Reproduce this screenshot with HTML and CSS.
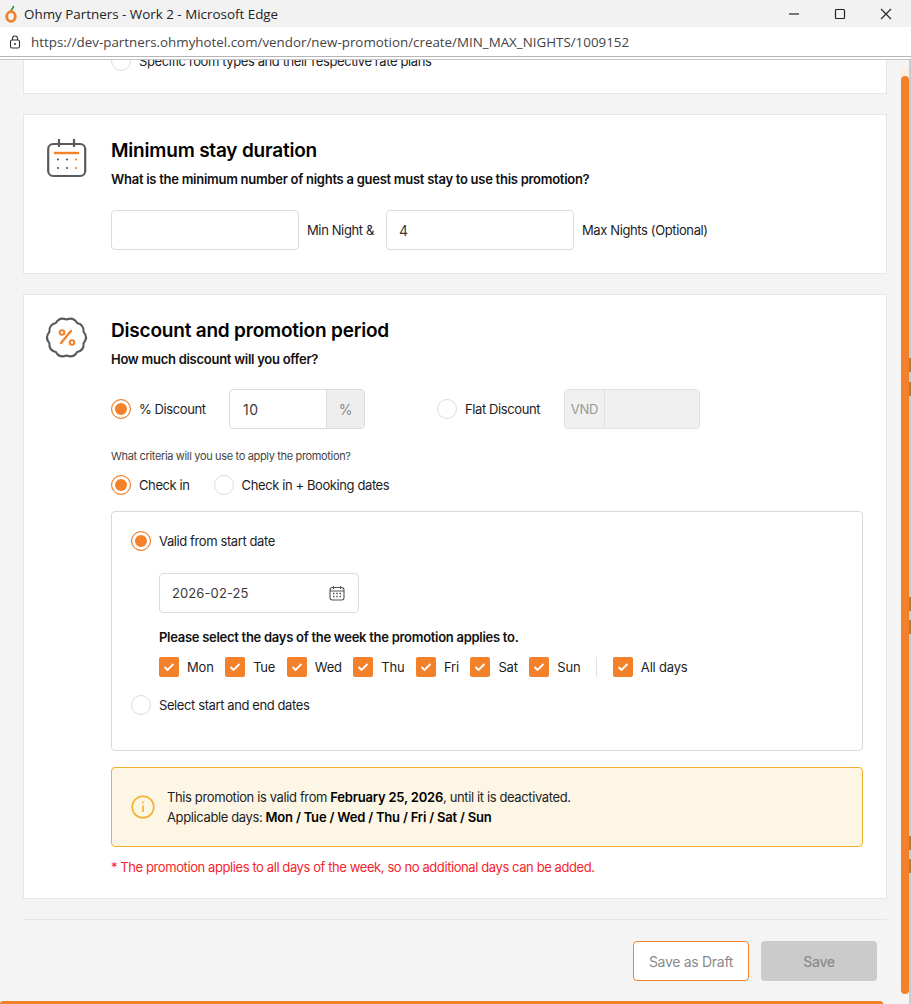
FILE: index.html
```html
<!DOCTYPE html>
<html lang="en">
<head>
<meta charset="utf-8">
<title>Ohmy Partners - Work 2 - Microsoft Edge</title>
<link rel="stylesheet" href="styles.css">
</head>
<body>
<div class="window">
  <header class="titlebar">
    <svg class="logo" width="14" height="18" viewBox="0 0 14 18"><path d="M7 6 9.800 1" stroke="#3f8f3a" stroke-width="1.600" fill="none"/><ellipse cx="7" cy="11.500" rx="4.300" ry="4.800" fill="none" stroke="#f28129" stroke-width="2.800"/></svg>
    <span class="title">Ohmy Partners - Work 2 - Microsoft Edge</span>
    <div class="winctl">
      <svg width="12" height="12" viewBox="0 0 12 12"><path d="M1 6h10" stroke="#222" stroke-width="1.200"/></svg>
      <svg width="12" height="12" viewBox="0 0 12 12"><rect x="1.500" y="1.500" width="9" height="9" rx="1" fill="none" stroke="#222" stroke-width="1.200"/></svg>
      <svg width="12" height="12" viewBox="0 0 12 12"><path d="M1 1l10 10M11 1 1 11" stroke="#222" stroke-width="1.100"/></svg>
    </div>
  </header>
  <div class="addressbar">
    <svg width="12" height="14" viewBox="0 0 12 14"><path d="M3.500 5V3.500a2.500 2.500 0 0 1 5 0V5" fill="none" stroke="#333" stroke-width="1.100"/><rect x="1.500" y="5" width="9" height="8" rx="1.500" fill="none" stroke="#333" stroke-width="1.100"/><circle cx="6" cy="9" r="1" fill="#333"/></svg>
    <span class="url">https://dev-partners.ohmyhotel.com/vendor/new-promotion/create/MIN_MAX_NIGHTS/1009152</span>
  </div>
  <main class="content">
    <section class="card card-clipped">
      <label class="radio-row"><span class="radio"></span><span>Specific room types and their respective rate plans</span></label>
    </section>

    <section class="card card-stay">
      <svg class="section-icon" width="42" height="42" viewBox="0 0 42 42" fill="none">
        <rect x="2.200" y="5" width="37" height="32" rx="5" stroke="#5a5a5a" stroke-width="2.200"/>
        <path d="M13 0v8M28 0v8" stroke="#5a5a5a" stroke-width="2.200"/>
        <path d="M8 14h25" stroke="#f28129" stroke-width="2.400"/>
        <g fill="#5a5a5a"><circle cx="12" cy="20.500" r="1.100"/><circle cx="21" cy="20.500" r="1.100"/><circle cx="12" cy="29" r="1.100"/><circle cx="21" cy="29" r="1.100"/></g>
        <g fill="#f28129"><circle cx="30" cy="20.500" r="1.100"/><circle cx="30" cy="29" r="1.100"/></g>
      </svg>
      <div class="section-body">
        <h2>Minimum stay duration</h2>
        <p class="question">What is the minimum number of nights a guest must stay to use this promotion?</p>
        <div class="nights-row">
          <div class="field field-nights"></div>
          <span>Min Night &amp;</span>
          <div class="field field-nights max"><span class="value">4</span></div>
          <span>Max Nights (Optional)</span>
        </div>
      </div>
    </section>

    <section class="card card-discount">
      <svg class="section-icon" width="42" height="42" viewBox="0 0 42 42" fill="none">
        <path d="M20.500 1.500Q27.300 -1.400 31.100 4.900 38.300 6.600 37.600 13.900 42.500 19.500 37.600 25.100 38.300 32.400 31.100 34.100 27.300 40.400 20.500 37.500 13.700 40.400 9.900 34.100 2.700 32.400 3.400 25.100 -1.500 19.500 3.400 13.900 2.700 6.600 9.900 4.900 13.700 -1.400 20.500 1.500Z" stroke="#5a5a5a" stroke-width="2.100" stroke-linejoin="round"/>
        <path d="M25 13 15 25" stroke="#f28129" stroke-width="2.300" stroke-linecap="round"/>
        <circle cx="16" cy="14.500" r="2.300" stroke="#f28129" stroke-width="2"/>
        <circle cx="26" cy="24.500" r="2.300" stroke="#f28129" stroke-width="2"/>
      </svg>
      <div class="section-body">
        <h2>Discount and promotion period</h2>
        <p class="question">How much discount will you offer?</p>
        <div class="discount-row">
          <label class="radio-row percent-option"><span class="radio on"></span><span>% Discount</span></label>
          <div class="field field-addon percent">
            <span class="value">10</span><span class="addon">%</span>
          </div>
          <label class="radio-row flat-option"><span class="radio"></span><span>Flat Discount</span></label>
          <div class="field-disabled"><span class="vnd">VND</span></div>
        </div>
        <p class="criteria">What criteria will you use to apply the promotion?</p>
        <div class="criteria-row">
          <label class="radio-row"><span class="radio on"></span><span>Check in</span></label>
          <label class="radio-row"><span class="radio"></span><span>Check in + Booking dates</span></label>
        </div>
        <div class="period-box">
          <label class="radio-row"><span class="radio on"></span><span>Valid from start date</span></label>
          <div class="period-inner">
            <div class="field field-date">
              <span class="value">2026-02-25</span>
              <svg width="16" height="16" viewBox="0 0 16 16" fill="none"><rect x="1" y="2.500" width="14" height="12.500" rx="2.500" stroke="#555" stroke-width="1.100"/><path d="M1 6h14M4.500 1v3M11.500 1v3" stroke="#555" stroke-width="1.100"/><path d="M4 8.500h1.500M7.300 8.500h1.500M10.500 8.500H12M4 11.500h1.500M7.300 11.500h1.500M10.500 11.500H12" stroke="#555" stroke-width="1.300"/></svg>
            </div>
            <p class="days-title">Please select the days of the week the promotion applies to.</p>
            <div class="days-row">
              <label class="day"><span class="check"><svg width="12" height="10" viewBox="0 0 12 10"><path d="M1.500 5l3 3 6-6" fill="none" stroke="#fff" stroke-width="1.800"/></svg></span>Mon</label>
              <label class="day"><span class="check"><svg width="12" height="10" viewBox="0 0 12 10"><path d="M1.500 5l3 3 6-6" fill="none" stroke="#fff" stroke-width="1.800"/></svg></span>Tue</label>
              <label class="day"><span class="check"><svg width="12" height="10" viewBox="0 0 12 10"><path d="M1.500 5l3 3 6-6" fill="none" stroke="#fff" stroke-width="1.800"/></svg></span>Wed</label>
              <label class="day"><span class="check"><svg width="12" height="10" viewBox="0 0 12 10"><path d="M1.500 5l3 3 6-6" fill="none" stroke="#fff" stroke-width="1.800"/></svg></span>Thu</label>
              <label class="day"><span class="check"><svg width="12" height="10" viewBox="0 0 12 10"><path d="M1.500 5l3 3 6-6" fill="none" stroke="#fff" stroke-width="1.800"/></svg></span>Fri</label>
              <label class="day"><span class="check"><svg width="12" height="10" viewBox="0 0 12 10"><path d="M1.500 5l3 3 6-6" fill="none" stroke="#fff" stroke-width="1.800"/></svg></span>Sat</label>
              <label class="day"><span class="check"><svg width="12" height="10" viewBox="0 0 12 10"><path d="M1.500 5l3 3 6-6" fill="none" stroke="#fff" stroke-width="1.800"/></svg></span>Sun</label>
              <span class="days-sep"></span>
              <label class="day"><span class="check"><svg width="12" height="10" viewBox="0 0 12 10"><path d="M1.500 5l3 3 6-6" fill="none" stroke="#fff" stroke-width="1.800"/></svg></span>All days</label>
            </div>
          </div>
          <label class="radio-row"><span class="radio"></span><span>Select start and end dates</span></label>
        </div>
        <div class="notice">
          <svg width="24" height="24" viewBox="0 0 24 24" fill="none"><circle cx="12" cy="12" r="10.800" stroke="#f2b02e" stroke-width="1.600"/><path d="M12 10.500v6.500" stroke="#f2b02e" stroke-width="1.600"/><circle cx="12" cy="7.500" r="1" fill="#f2b02e"/></svg>
          <div>
            <p>This promotion is valid from <b>February 25, 2026</b>, until it is deactivated.</p>
            <p>Applicable days: <b>Mon / Tue / Wed / Thu / Fri / Sat / Sun</b></p>
          </div>
        </div>
        <p class="warning">* The promotion applies to all days of the week, so no additional days can be added.</p>
      </div>
    </section>

    <footer class="actions">
      <button class="btn btn-draft" type="button">Save as Draft</button>
      <button class="btn btn-save" type="button">Save</button>
    </footer>
  </main>
  <div class="scroll-track"></div>
  <div class="scroll-thumb"></div>
  <div class="scroll-bottom"></div>
  <div class="edge-strip">
    <span class="edge-mark m1"></span><span class="edge-mark m2"></span>
    <span class="edge-mark m3"></span><span class="edge-mark m4"></span>
    <span class="edge-mark m5"></span><span class="edge-mark m6"></span>
  </div>
</div>
</body>
</html>
```

FILE: styles.css
```css
* { box-sizing: border-box; }
html, body { margin: 0; padding: 0; }
body {
  width: 911px;
  height: 1004px;
  overflow: hidden;
  font-family: Inter, "Liberation Sans", sans-serif;
  font-size: 14px;
  color: #1d1d1f;
  background: #f4f4f4;
}
p, h2 { margin: 0; }
.window { position: relative; width: 911px; height: 1004px; overflow: hidden; display: flex; flex-direction: column; }

.titlebar {
  height: 27px;
  flex: none;
  display: flex;
  align-items: center;
  background: #f2f2f2;
  padding-left: 4px;
}
.logo { flex: none; }
.title {
  margin-left: 6px;
  font-family: "Open Sans", "Noto Sans", sans-serif;
  font-size: 13.4px;
  color: #222;
}
.winctl { margin-left: auto; display: flex; gap: 34px; padding-right: 19px; }

.addressbar {
  height: 30px;
  flex: none;
  display: flex;
  align-items: center;
  gap: 10px;
  padding-left: 9px;
  background: #fff;
  border-bottom: 1px solid #b5b5b5;
  position: relative;
  z-index: 2;
  box-shadow: 0 2px 0 #fff, 0 3px 0 #c4c4c4;
}
.url {
  font-family: "Open Sans", "Noto Sans", sans-serif;
  font-size: 13.36px;
  color: #444;
}

.content { flex: 1; padding: 0 24px 0 23px; overflow: hidden; }

.card {
  background: #fff;
  border: 1px solid #e6e6e6;
  display: flex;
}
.card-clipped {
  height: 64px;
  margin-top: -27px;
  padding: 20px 0 0 87px;
  align-items: flex-start;
}
.card-stay { height: 160px; margin-top: 20px; padding: 24px 0 0 22px; }
.card-discount { height: 605px; margin-top: 20px; padding: 23px 0 0 22px; }

.section-icon { flex: none; margin-right: 23px; overflow: visible; }
.section-body { flex: 1; min-width: 0; padding-right: 23px; }
h2 { font-size: 19px; line-height: 23px; font-weight: 600; color: #000; letter-spacing: -0.2px; }
.question { margin-top: 8px; font-size: 13px; line-height: 18px; font-weight: 600; color: #111; letter-spacing: -0.27px; }
.card-discount h2 { margin-top: 1px; }

.field {
  height: 40px;
  background: #fff;
  border: 1px solid #dcdcdc;
  border-radius: 4px;
  display: flex;
  align-items: center;
}
.value { letter-spacing: 0.2px; color: #3a3a3a; }

.nights-row { display: flex; align-items: center; margin-top: 22px; gap: 8px; font-size: 13px; letter-spacing: -0.38px; }
.field-nights { width: 188px; }
.field-nights.max { margin-left: 4px; padding-left: 12px; }
.field-nights .value { font-size: 14px; }

.radio-row { display: flex; align-items: center; gap: 8px; font-size: 13px; line-height: 20px; color: #1d1d1f; letter-spacing: -0.4px; }
.radio {
  flex: none;
  width: 20px;
  height: 20px;
  border-radius: 50%;
  border: 1px solid #dcdcdc;
  background: #fff;
}
.radio.on {
  border-color: #f28129;
  background: #f28129;
  box-shadow: inset 0 0 0 3px #fff;
}

.discount-row { display: flex; align-items: center; margin-top: 21px; }
.percent-option { width: 118px; }
.field-addon { width: 136px; overflow: hidden; padding-left: 13px; justify-content: space-between; }
.field-addon .value { letter-spacing: 0.6px; }
.addon {
  width: 38px;
  height: 38px;
  background: #eeeeee;
  border-left: 1px solid #dcdcdc;
  color: #888;
  display: flex;
  align-items: center;
  justify-content: center;
}
.flat-option { margin-left: 72px; width: 127px; }
.field-disabled {
  width: 136px;
  height: 40px;
  background: #f0f0f0;
  border: 1px solid #e2e2e2;
  border-radius: 4px;
  display: flex;
  align-items: stretch;
}
.vnd {
  width: 40px;
  border-right: 1px solid #e0e0e0;
  color: #999;
  font-size: 13px;
  letter-spacing: -0.2px;
  display: flex;
  align-items: center;
  justify-content: center;
}
.criteria { margin-top: 19px; font-size: 11px; line-height: 16px; color: #444; letter-spacing: -0.34px; }
.criteria-row { display: flex; gap: 24px; margin-top: 11px; }

.period-box {
  margin-top: 16px;
  height: 240px;
  background: #fff;
  border: 1px solid #d9d9d9;
  border-radius: 4px;
  padding: 19px 19px 0;
}
.period-inner { padding-left: 28px; margin-top: 22px; }
.field-date { width: 200px; padding: 0 13px 0 12px; justify-content: space-between; font-size: 13px; }
.field-date .value { letter-spacing: 0.1px; }
.days-title { margin-top: 14px; font-size: 13px; line-height: 20px; font-weight: 600; color: #111; letter-spacing: -0.28px; }
.days-row { display: flex; align-items: center; margin-top: 10px; height: 20px; margin-bottom: 18px; font-size: 13px; letter-spacing: -0.2px; }
.day { display: flex; align-items: center; gap: 8px; margin-right: 11.5px; }
.check {
  width: 20px;
  height: 20px;
  background: #f28129;
  border-radius: 2px;
  display: flex;
  align-items: center;
  justify-content: center;
}
.days-sep { width: 1px; height: 20px; background: #e2e2e2; margin: 0 16px 0 4px; }

.notice {
  margin-top: 16px;
  height: 80px;
  background: #fdf6e4;
  border: 1px solid #f2b02e;
  border-radius: 4px;
  display: flex;
  align-items: center;
  gap: 12px;
  padding-left: 19px;
  font-size: 13px;
  line-height: 20px;
  color: #1d1d1f;
  letter-spacing: -0.38px;
}
.notice b { font-weight: 600; color: #000; letter-spacing: -0.2px; }
.warning { margin-top: 10px; font-size: 13px; line-height: 20px; color: #f5262d; letter-spacing: -0.41px; }

.actions {
  margin-top: 20px;
  border-top: 1px solid #e6e6e6;
  display: flex;
  justify-content: flex-end;
  gap: 12px;
  padding: 21px 10px 0 0;
}
.btn {
  height: 40px;
  border-radius: 4px;
  font-family: inherit;
  font-size: 14px;
  letter-spacing: -0.3px;
  padding: 0;
}
.btn-draft { width: 116px; background: #fff; border: 1px solid #f28129; color: #8b8b8b; }
.btn-save { width: 116px; background: #cbcbcb; border: 0; color: #8b8b8b; font-weight: 500; }

.scroll-track { position: absolute; left: 901px; top: 68px; width: 8px; height: 10px; background: #fdeee2; }
.scroll-thumb { position: absolute; left: 901px; top: 76px; width: 8px; height: 918px; background: #f28129; border-radius: 4px; }
.scroll-bottom { position: absolute; left: 0; top: 1001px; width: 883px; height: 3px; background: #f28129; border-radius: 3px 3px 0 0; }
.edge-strip { position: absolute; left: 909px; top: 60px; width: 2px; height: 944px; background: #c9ced1; }
.edge-mark { position: absolute; left: 0; width: 2px; height: 14px; background: #b97a3f; }
.m1 { top: 298px; } .m2 { top: 322px; }
.m3 { top: 537px; } .m4 { top: 560px; }
.m5 { top: 776px; } .m6 { top: 799px; }
```
